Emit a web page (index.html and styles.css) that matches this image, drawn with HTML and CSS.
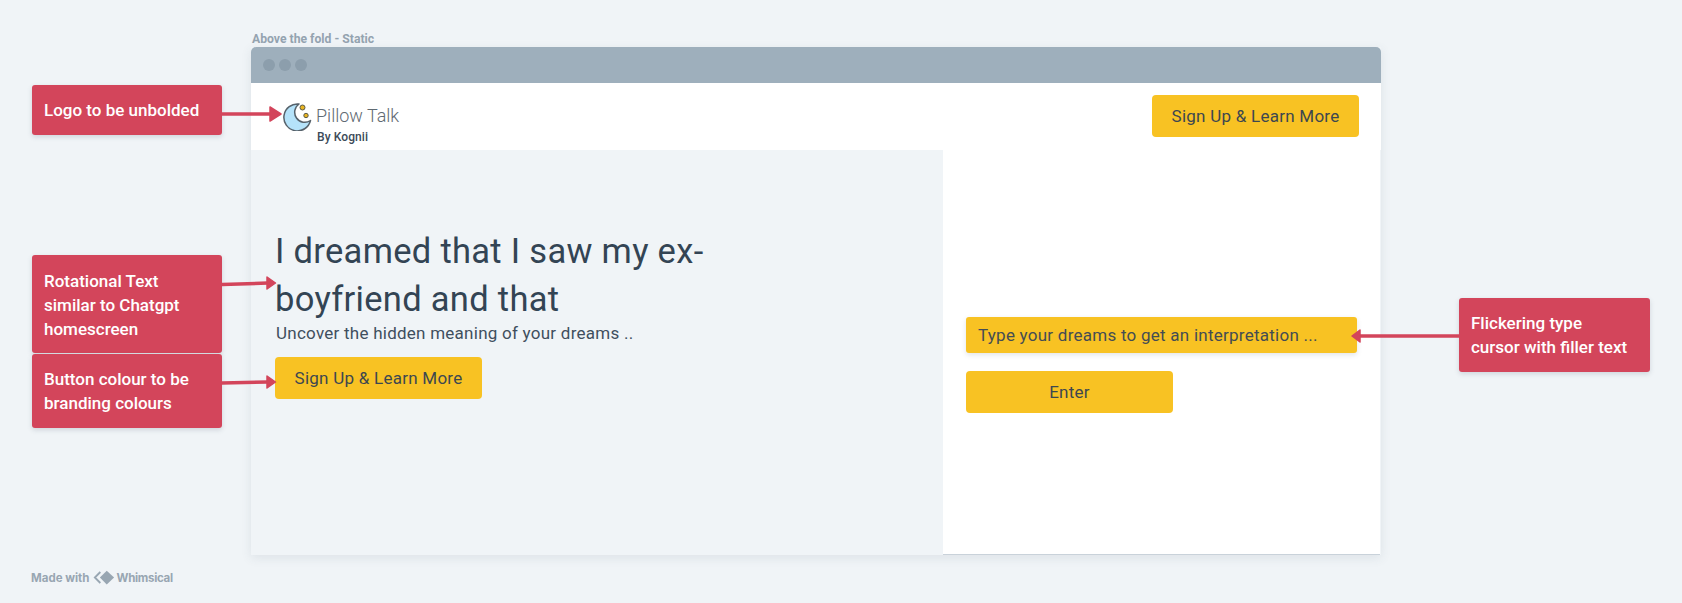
FILE: index.html
```html
<!DOCTYPE html>
<html lang="en">
<head>
<meta charset="utf-8">
<title>Above the fold - Static</title>
<link rel="stylesheet" href="styles.css">
</head>
<body>
<main class="board">
  <div class="frame-label">Above the fold - Static</div>
  <section class="window">
    <div class="titlebar"><i class="dot"></i><i class="dot"></i><i class="dot"></i></div>
    <header class="site-head">
      <div class="logo">
        <svg class="logo-mark" viewBox="0 0 30 30" width="30" height="30" aria-hidden="true">
          <path d="M16 3 A13.500 13.500 0 1 0 27.500 19.500 A9.200 9.200 0 0 1 16 3 Z" fill="#b5e3fa" stroke="#56626b" stroke-width="1.500" stroke-linejoin="round"/>
          <circle cx="19.500" cy="6.500" r="2.500" fill="#e8b420" stroke="#5a5a4a" stroke-width="1"/>
          <circle cx="23" cy="14.500" r="2.200" fill="#e8b420" stroke="#5a5a4a" stroke-width="1"/>
        </svg>
        <div class="logo-text">
          <span class="logo-name">Pillow Talk</span>
          <span class="logo-by">By Kognii</span>
        </div>
      </div>
      <a class="btn btn-head">Sign Up &amp; Learn More</a>
    </header>
    <div class="content">
      <div class="hero">
        <h1>I dreamed that I saw my ex-<br>boyfriend and that</h1>
        <p>Uncover the hidden meaning of your dreams ..</p>
        <a class="btn btn-hero">Sign Up &amp; Learn More</a>
      </div>
      <div class="side">
        <div class="field">Type your dreams to get an interpretation ...</div>
        <a class="btn btn-enter">Enter</a>
      </div>
    </div>
  </section>

  <div class="note note-logo">Logo to be unbolded</div>
  <div class="note note-text">Rotational Text<br>similar to Chatgpt<br>homescreen</div>
  <div class="note note-button">Button colour to be<br>branding colours</div>
  <div class="note note-cursor">Flickering type<br>cursor with filler text</div>

  <svg class="arrows" width="1682" height="603" viewBox="0 0 1682 603" aria-hidden="true">
    <g fill="none" stroke="#d3455b" stroke-width="3.500">
      <path d="M222 114 H272"/>
      <path d="M222 284.500 L268 283"/>
      <path d="M222 383 L268 382"/>
      <path d="M1459 336 H1358"/>
    </g>
    <g fill="#d3455b" stroke="#d3455b" stroke-width="1.500" stroke-linejoin="round">
      <path d="M270 107 L281 114 L270 121 Z"/>
      <path d="M267 277 L275.500 283 L267 289 Z"/>
      <path d="M267 376 L275.500 382 L267 388 Z"/>
      <path d="M1360 330 L1352 336 L1360 342 Z"/>
    </g>
  </svg>

  <footer class="made">
    <span>Made with</span>
    <svg class="made-mark" viewBox="0 0 24 16" width="22" height="15" aria-hidden="true">
      <path d="M8 2 L2 8 L8 14" fill="none" stroke="#98a6b2" stroke-width="2"/>
      <path d="M15 0.500 L23 8 L15 15.500 L7.500 8 Z" fill="#98a6b2"/>
    </svg>
    <span class="made-name">Whimsical</span>
  </footer>
</main>
</body>
</html>
```
FILE: styles.css
```css
* { box-sizing: border-box; }
html, body { margin: 0; height: 100%; }
body {
  background: #f0f4f7;
  color: #334454;
  font-family: Roboto, "Noto Sans", sans-serif;
  overflow: hidden;
}
.board { position: relative; width: 1682px; height: 603px; }

.frame-label {
  position: absolute; left: 252px; top: 32px;
  font-size: 12.200px; font-weight: 700; line-height: 14px; color: #94a3b0;
}

.window {
  position: absolute; left: 251px; top: 47px;
  width: 1130px; height: 508px;
  display: flex; flex-direction: column;
  box-shadow: 0 3px 10px rgba(60, 80, 100, .10);
}
.titlebar {
  height: 36px; flex: none;
  background: #9eafbc;
  border-radius: 5px 5px 0 0;
  display: flex; align-items: center; gap: 4px;
  padding-left: 12px;
}
.dot { width: 12px; height: 12px; border-radius: 50%; background: #8c9eac; }

.site-head {
  height: 67px; flex: none;
  background: #fff;
  display: flex; align-items: flex-start; justify-content: space-between;
  padding: 12px 22px 0 32px;
}
.logo { display: flex; align-items: flex-start; gap: 3px; padding-top: 6px; }
.logo-mark { flex: none; }
.logo-text { display: flex; flex-direction: column; padding-top: 3px; }
.logo-name { font-size: 18px; font-weight: 300; line-height: 24px; color: #5f6a72; }
.logo-by { font-size: 12px; font-weight: 500; line-height: 14px; color: #3c4a58; margin: 2px 0 0 1px; letter-spacing: .1px; }

.btn {
  display: flex; align-items: center; justify-content: center;
  background: #f8c223;
  border-radius: 4px;
  font-size: 17px; color: #3d4750;
  letter-spacing: .25px;
}
.btn-head { width: 207px; height: 42px; }
.btn-hero { width: 207px; height: 42px; }
.btn-enter { width: 207px; height: 42px; margin-top: 18px; }

.content { flex: 1; display: flex; min-height: 0; }
.hero { width: 692px; flex: none; padding: 77px 0 0 24px; background: #f0f4f7; }
.hero h1 {
  margin: 0;
  font-size: 34.500px; font-weight: 400; line-height: 48px; color: #334454;
  letter-spacing: .3px;
}
.hero p {
  margin: -2px 0 12px; padding-left: 1px;
  font-size: 17px; line-height: 24px; color: #3f4f5e; letter-spacing: .25px;
}

.side {
  flex: 1; background: #fff;
  margin-right: 1px;
  padding: 167px 0 0 23px;
  border-bottom: 1px solid #c9d2da;
}
.field {
  width: 391px; height: 36px;
  background: #f8c223; border-radius: 3px;
  box-shadow: 0 2px 5px rgba(60, 80, 100, .15);
  display: flex; align-items: center;
  padding-left: 12px;
  font-size: 17px; color: #444c54; letter-spacing: .25px;
}

.note {
  position: absolute;
  background: #d3455b; color: #fff;
  border-radius: 3px;
  box-shadow: 0 2px 5px rgba(60, 80, 100, .18);
  font-size: 17px; font-weight: 500; line-height: 24px;
  padding: 13px 12px;
  width: 190px;
}
.note-logo { left: 32px; top: 85px; height: 50px; }
.note-text { left: 32px; top: 255px; height: 98px; padding-top: 14px; }
.note-button { left: 32px; top: 354px; height: 74px; }
.note-cursor { left: 1459px; top: 298px; height: 74px; width: 191px; }

.arrows { position: absolute; left: 0; top: 0; pointer-events: none; }

.made {
  position: absolute; left: 31px; top: 570px;
  display: flex; align-items: center; gap: 3px;
  font-family: Inter, Roboto, sans-serif;
  font-size: 11.500px; font-weight: 700; color: #98a6b2;
}
.made-name { letter-spacing: -.3px; margin-left: -1px; }
```
